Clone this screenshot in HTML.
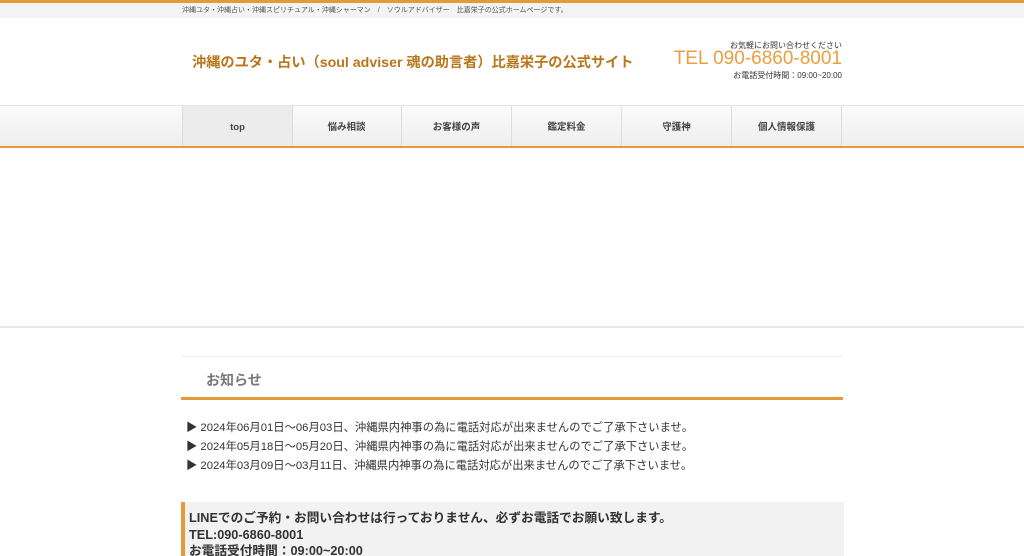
<!DOCTYPE html>
<html><head><meta charset="utf-8"><style>
html,body{margin:0;width:1024px;height:556px;overflow:hidden}
body{background:#fff;font-family:"Liberation Sans","Noto Sans CJK JP",sans-serif;color:#333;position:relative}
.top{border-top:3px solid #e39a38;background:#f3f3f3;height:15px}
.top div{position:absolute;left:182px;top:5px;font-size:7px;color:#555}
.h1{position:absolute;left:192px;top:52px;font-size:14.2px;font-weight:bold;color:#b8761b}
.r{position:absolute;right:182px;text-align:right}
.nav{position:absolute;top:105px;left:0;width:1024px;height:40px;background:linear-gradient(#fbfbfb,#eeeeee);border-top:1px solid #e6e6e6;border-bottom:2px solid #e39a38}
.nav div{position:absolute;top:0;height:40px;width:109px;border-right:1px solid #dcdcdc;text-align:center;line-height:43px;font-size:9.5px;font-weight:bold;color:#444}
.sep{position:absolute;top:326px;left:0;width:1024px;height:2px;background:#e8e8e8}
.news{position:absolute;font-size:11.3px;color:#333}
</style></head><body>
<div class="top"><div>沖縄ユタ・沖縄占い・沖縄スピリチュアル・沖縄シャーマン　/　ソウルアドバイザー　比嘉栄子の公式ホームページです。</div></div>
<div class="h1">沖縄のユタ・占い（soul adviser 魂の助言者）比嘉栄子の公式サイト</div>
<div class="r" style="top:40px;font-size:8px">お気軽にお問い合わせください</div>
<div class="r" style="top:48px;font-size:19px;color:#e8a040">TEL 090-6860-8001</div>
<div class="r" style="top:70px;font-size:8px">お電話受付時間：09:00~20:00</div>
<div class="nav">
<div style="left:182px;background:#ececec;border-left:1px solid #dcdcdc">top</div>
<div style="left:292px">悩み相談</div>
<div style="left:402px">お客様の声</div>
<div style="left:512px">鑑定料金</div>
<div style="left:622px">守護神</div>
<div style="left:732px">個人情報保護</div>
</div>
<div class="sep"></div>
<div style="position:absolute;left:181px;top:356px;width:662px;height:1px;background:#eee"></div>
<div style="position:absolute;left:206px;top:370px;font-size:14px;font-weight:bold;color:#777">お知らせ</div>
<div style="position:absolute;left:181px;top:397px;width:662px;height:3px;background:#e39a38"></div>
<div class="news" style="left:186px;top:419px">▶ 2024年06月01日～06月03日、沖縄県内神事の為に電話対応が出来ませんのでご了承下さいませ。</div>
<div class="news" style="left:186px;top:438px">▶ 2024年05月18日～05月20日、沖縄県内神事の為に電話対応が出来ませんのでご了承下さいませ。</div>
<div class="news" style="left:186px;top:457px">▶ 2024年03月09日～03月11日、沖縄県内神事の為に電話対応が出来ませんのでご了承下さいませ。</div>
<div style="position:absolute;left:181px;top:502px;height:54px;background:#f2f2f2;border-left:4px solid #e39a38;padding-left:4px;font-size:12.7px;font-weight:bold;line-height:16.5px;padding-top:8px;color:#333;box-sizing:border-box;width:663px">LINEでのご予約・お問い合わせは行っておりません、必ずお電話でお願い致します。<br>TEL:090-6860-8001<br>お電話受付時間：09:00~20:00</div>
</body></html>
